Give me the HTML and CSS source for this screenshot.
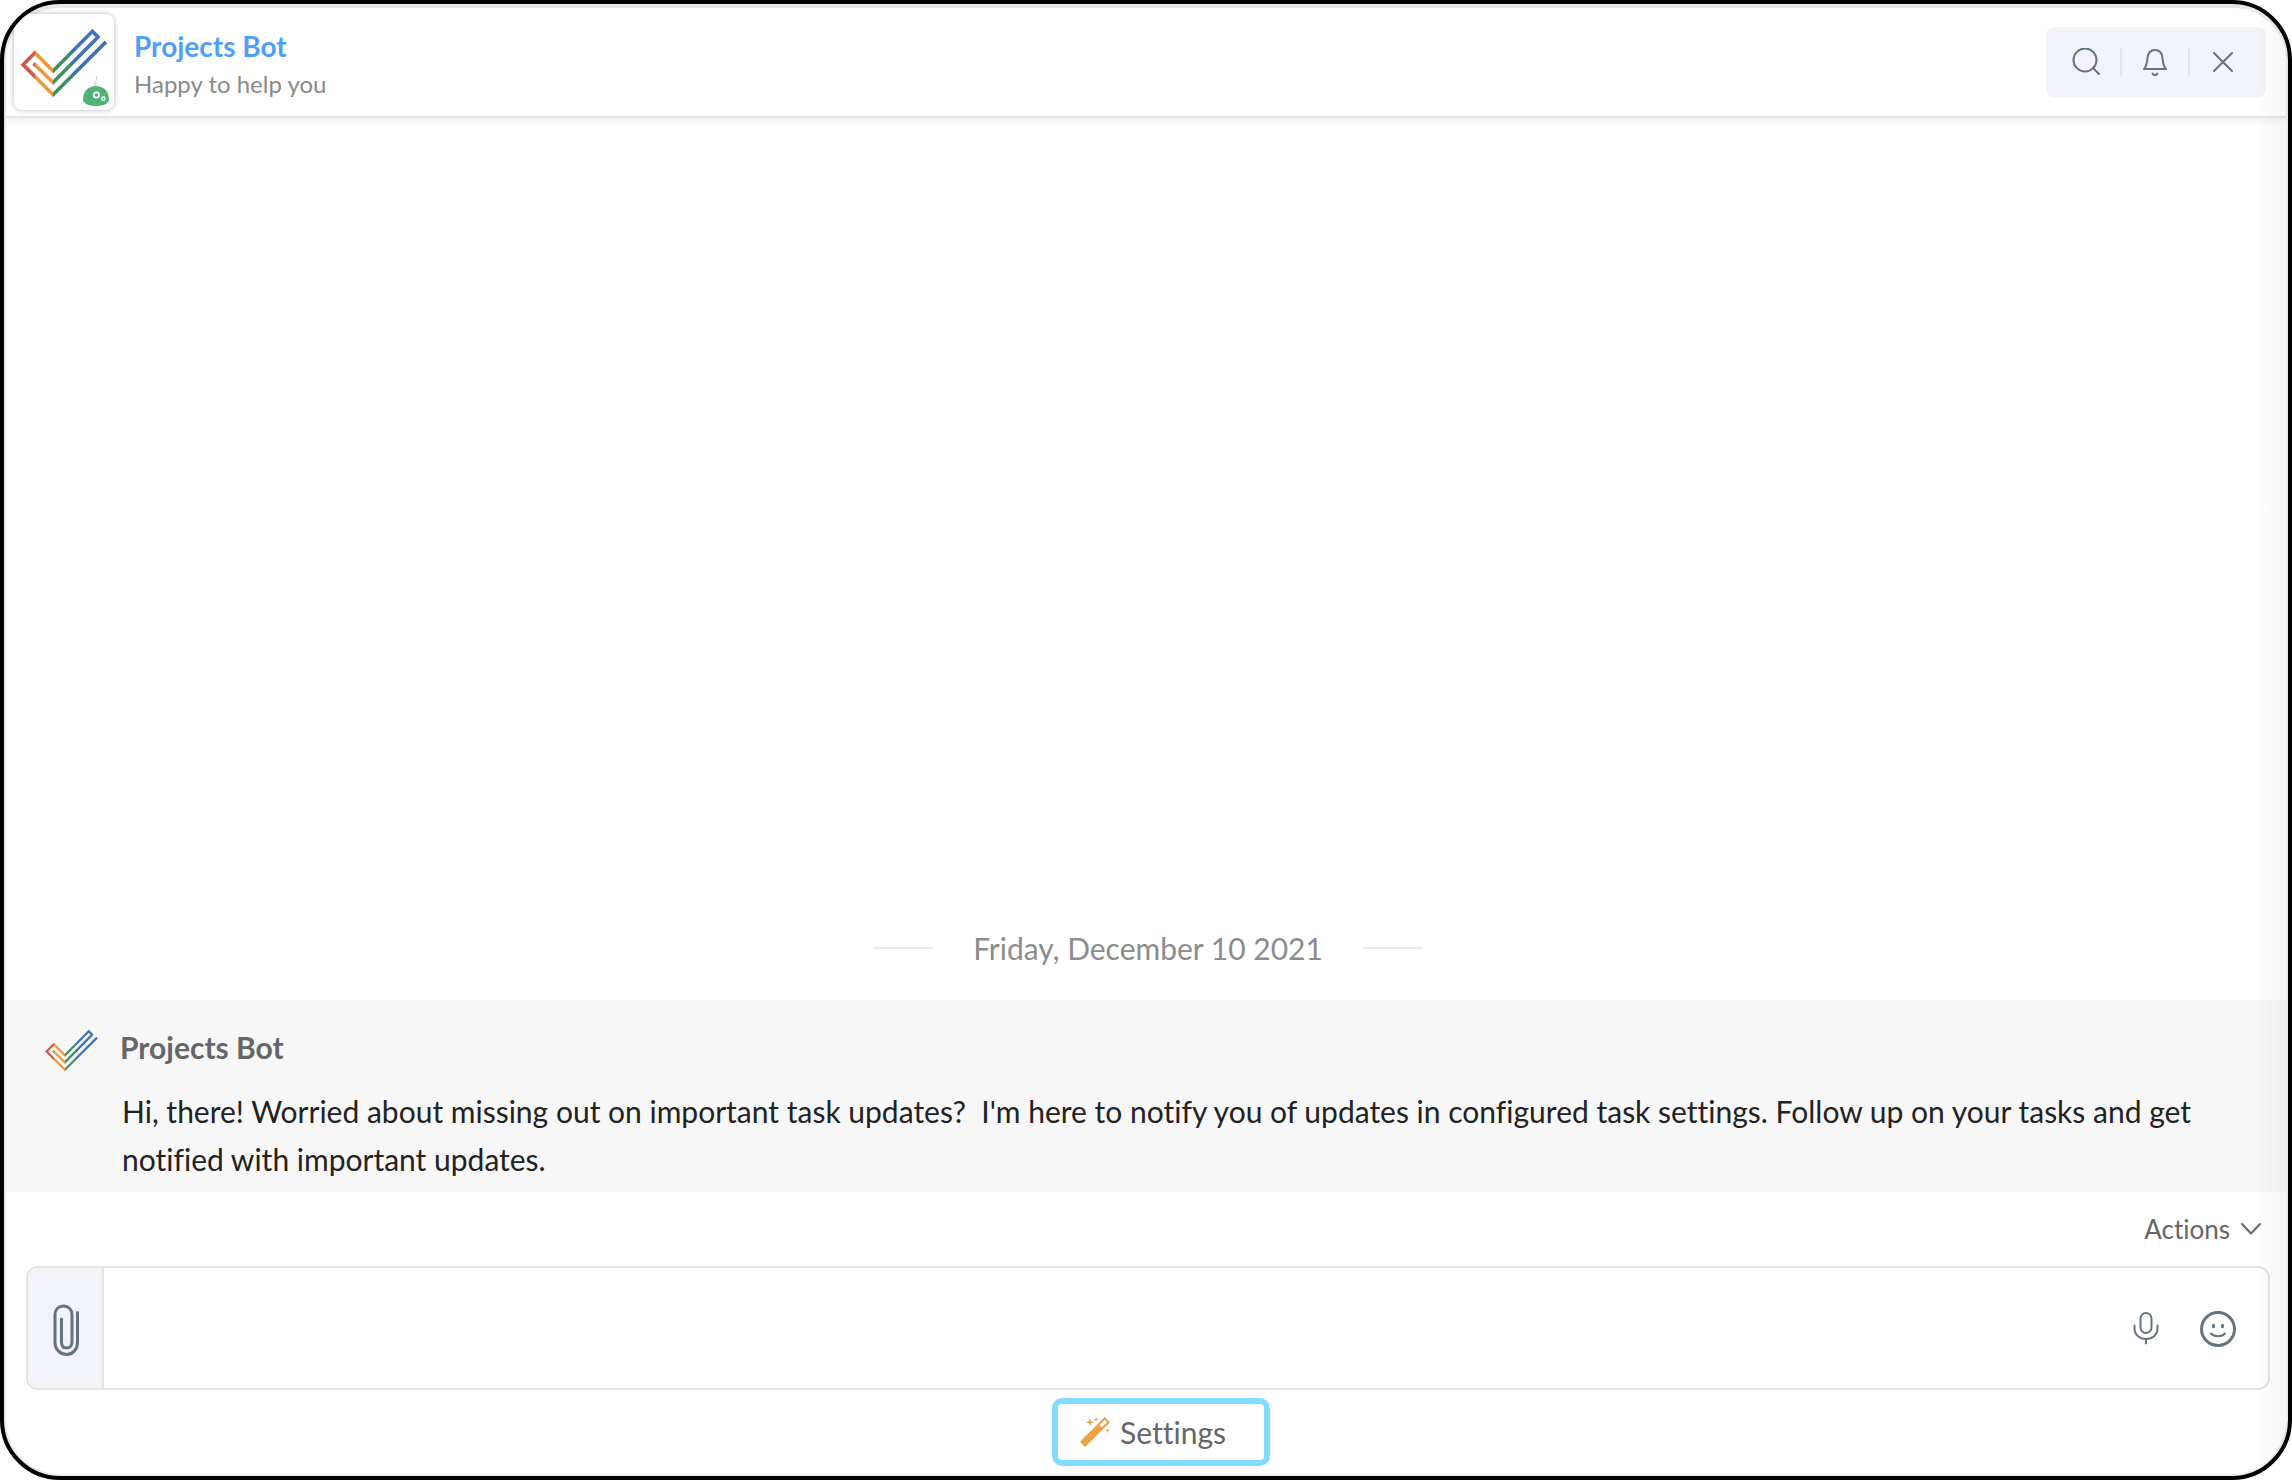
FILE: index.html
```html
<!DOCTYPE html>
<html lang="en">
<head>
<meta charset="utf-8">
<title>Projects Bot</title>
<link rel="stylesheet" href="styles.css">
</head>
<body>
<svg class="defs" aria-hidden="true">
  <defs>
    <linearGradient id="check-colors" gradientUnits="userSpaceOnUse" x1="0" y1="0" x2="360" y2="0">
      <stop offset="0.2889" stop-color="#cf584f"/>
      <stop offset="0.2889" stop-color="#ea9a3e"/>
      <stop offset="0.4444" stop-color="#ea9a3e"/>
      <stop offset="0.4444" stop-color="#3f8e64"/>
      <stop offset="0.5917" stop-color="#3f8e64"/>
      <stop offset="0.5917" stop-color="#4073b6"/>
    </linearGradient>
    <symbol id="check" viewBox="60 80 264 212">
      <path d="M319 122L159 282L68 191L104 155L159 210L278 90L295 107L159 245L100 187" fill="none" stroke="url(#check-colors)" stroke-width="11"/>
    </symbol>
  </defs>
</svg>
<div class="window">
  <header class="header">
    <div class="avatar">
      <svg class="avatar-logo" aria-hidden="true"><use href="#check"/></svg>
      <svg class="avatar-bot" viewBox="0 0 78 90" aria-hidden="true">
        <path d="M31 34L34 17M37 32L41 0" fill="none" stroke="#9ad2ad" stroke-width="2"/>
        <path d="M0 69C1 45 17 30 39 30S77 45 78 69C78 83 62 90 39 90S0 83 0 69Z" fill="#52b175"/>
        <circle cx="40" cy="57" r="8" fill="none" stroke="#fff" stroke-width="5"/>
        <circle cx="61" cy="68" r="5" fill="none" stroke="#fff" stroke-width="4"/>
      </svg>
    </div>
    <div class="identity">
      <h1 class="title">Projects Bot</h1>
      <p class="subtitle">Happy to help you</p>
    </div>
    <div class="tools">
      <button class="tool" type="button" aria-label="Search">
        <svg class="tool-icon" viewBox="0 0 28 28"><circle cx="13" cy="12" r="11.5"/><path d="M21 20L27 26"/></svg>
      </button>
      <button class="tool" type="button" aria-label="Notifications">
        <svg class="tool-icon" viewBox="0 0 28 28"><path d="M3 21C6 18 6 14 6.500 10C7 5 10 2 14 2S21 5 21.500 10C22 14 22 18 25 21Z"/><path d="M11.500 25.500C12 27.500 16 27.500 16.500 25.500"/></svg>
      </button>
      <button class="tool" type="button" aria-label="Close">
        <svg class="tool-icon" viewBox="0 0 28 28"><path d="M5 5L23 23M23 5L5 23"/></svg>
      </button>
    </div>
  </header>

  <main class="conversation">
    <div class="date">Friday, December 10 2021</div>
    <article class="message">
      <svg class="message-logo" aria-hidden="true"><use href="#check"/></svg>
      <div class="message-body">
        <h2 class="author">Projects Bot</h2>
        <p class="text">Hi, there! Worried about missing out on important task updates?&nbsp; I'm here to notify you of updates in configured task settings. Follow up on your tasks and get notified with important updates.</p>
      </div>
    </article>
  </main>

  <footer class="footer">
    <div class="actions-row">
      <button class="actions" type="button">Actions
        <svg class="chevron" viewBox="0 0 22 14" aria-hidden="true"><path d="M2 2L11 11.500L20 2"/></svg>
      </button>
    </div>
    <div class="composer">
      <button class="attach" type="button" aria-label="Attach a file">
        <svg class="clip" viewBox="0 0 26 52"><path d="M24.500 8.500V38.500C24.500 45.500 19.500 50.500 13.500 50.500S2 45.500 2 38.500V11C2 5.500 5.500 2 10.500 2S19 5.500 19 11V38C19 42 16.500 44 13.500 44S8.500 42 8.500 38V15"/></svg>
      </button>
      <textarea class="entry" aria-label="Message"></textarea>
      <div class="entry-tools">
        <button class="entry-tool" type="button" aria-label="Record audio">
          <svg class="entry-icon" viewBox="0 0 36 36"><rect x="12.500" y="2" width="11" height="20" rx="5.500"/><path d="M6.500 14.500V17.500C6.500 24 12 28 18 28S29.500 24 29.500 17.500V14.500M18 28V32.500"/></svg>
        </button>
        <button class="entry-tool" type="button" aria-label="Emoji">
          <svg class="entry-icon" viewBox="0 0 36 36"><circle class="face" cx="18" cy="18" r="16.500"/><path d="M11 22.500C14 26 22 26 25 22.500"/><g class="eyes"><ellipse cx="13.500" cy="15" rx="1.600" ry="2.200"/><ellipse cx="22.500" cy="15" rx="1.600" ry="2.200"/></g></svg>
        </button>
      </div>
    </div>
    <button class="settings" type="button">
      <svg class="wand" viewBox="0 0 90 90" aria-hidden="true">
        <path fill-rule="evenodd" d="M0 74L74 0L90 16L15 90ZM59 24L65 31L81 16L74 9Z"/>
        <path d="M30 3L33 13L43 16L33 19L30 29L27 19L17 16L27 13ZM48 0L50 5L55 7L50 9L48 14L46 9L41 7L46 5ZM83 34L85 39L90 41L85 43L83 48L81 43L76 41L81 39Z"/>
      </svg>
      Settings
    </button>
  </footer>
</div>
</body>
</html>
```
FILE: styles.css
```css
* {
  box-sizing: border-box;
}

body {
  margin: 0;
  background: #fff;
  font-family: Lato, "Liberation Sans", sans-serif;
  font-variant-ligatures: no-common-ligatures;
}

h1, h2, p {
  margin: 0;
}

button {
  padding: 0;
  border: 0;
  background: none;
  color: inherit;
  font: inherit;
  font-variant-ligatures: inherit;
}

.defs {
  position: absolute;
  width: 0;
  height: 0;
}

.window {
  position: relative;
  display: flex;
  flex-direction: column;
  min-height: 100vh;
  padding: 4px 2px 2px;
  border: 4px solid #000;
  border-radius: 60px;
  background:
    linear-gradient(#fff, #fff) content-box,
    #eaeaef;
  overflow: hidden;
}

.window::after {
  content: "";
  position: absolute;
  top: 4px;
  right: 2px;
  bottom: 2px;
  width: 30px;
  background: linear-gradient(to right, rgba(60, 70, 70, 0), rgba(60, 70, 70, 0.05));
  pointer-events: none;
}

.header {
  display: flex;
  align-items: center;
  height: 110px;
  padding: 0 20px 0 8px;
  border-bottom: 2px solid #e5e5e5;
  box-shadow: 0 2px 8px rgba(0, 0, 0, 0.08);
}

.avatar {
  position: relative;
  width: 100px;
  height: 96px;
  padding: 14px 6px;
  border-radius: 8px;
  background: #fff;
  box-shadow: 0 0 5px rgba(0, 0, 0, 0.3);
}

.avatar-logo {
  display: block;
  width: 88px;
  height: 70px;
}

.avatar-bot {
  position: absolute;
  right: 5px;
  bottom: 4px;
  width: 26px;
  height: 30px;
}

.identity {
  flex: 1;
  padding: 4px 0 0 20px;
}

.title {
  color: #4f9ff8;
  font-size: 28px;
  font-weight: 700;
  line-height: 40px;
}

.subtitle {
  color: #8a8a8a;
  font-size: 24px;
  line-height: 36px;
}

.tools {
  display: flex;
  align-items: center;
  height: 70px;
  padding: 0 10px 0 6px;
  border-radius: 8px;
  background: #f2f3f8;
}

.tool {
  display: flex;
  justify-content: center;
  width: 68px;
}

.tool + .tool {
  border-left: 2px solid #e3e4e8;
}

.tool-icon, .chevron, .clip, .entry-icon {
  fill: none;
  stroke: #65737f;
  stroke-width: 2;
  stroke-linecap: round;
  stroke-linejoin: round;
}

.tool-icon {
  width: 28px;
  height: 28px;
}

.conversation {
  flex: 1;
  display: flex;
  flex-direction: column;
  justify-content: flex-end;
}

.date {
  display: flex;
  align-items: center;
  justify-content: center;
  gap: 40px;
  margin-bottom: 34px;
  padding-left: 4px;
  color: #8c8c8c;
  font-size: 30px;
  line-height: 36px;
}

.date::before, .date::after {
  content: "";
  width: 60px;
  height: 2px;
  background: #eaeaf1;
}

.message {
  display: flex;
  padding: 29px 76px 9px 39px;
  background: #f7f7f7;
}

.message-logo {
  flex: none;
  width: 53px;
  height: 43px;
}

.message-body {
  padding-left: 22px;
}

.author {
  color: #666;
  font-size: 30px;
  font-weight: 700;
  line-height: 36px;
}

.text {
  padding: 22px 0 0 2px;
  color: #222;
  font-size: 30px;
  line-height: 48px;
}

.footer {
  display: flex;
  flex-direction: column;
  padding: 0 16px 8px 20px;
}

.actions-row {
  display: flex;
  justify-content: flex-end;
  height: 74px;
  padding-right: 8px;
}

.actions {
  display: flex;
  align-items: center;
  gap: 10px;
  color: #666;
  font-size: 26px;
}

.chevron {
  width: 22px;
  height: 14px;
  stroke: #666;
}

.composer {
  display: flex;
  height: 124px;
  border: 2px solid #e4e4e4;
  border-radius: 12px;
  overflow: hidden;
}

.attach {
  display: flex;
  align-items: center;
  justify-content: center;
  width: 76px;
  padding: 4px 0 0 2px;
  border-right: 2px solid #e4e4e4;
  background: #f2f3f8;
}

.clip {
  width: 26px;
  height: 52px;
  stroke-width: 3;
}

.entry {
  flex: 1;
  padding: 36px 20px;
  border: 0;
  outline: 0;
  background: transparent;
  color: #222;
  font: inherit;
  font-size: 30px;
  resize: none;
}

.entry-tools {
  display: flex;
  align-items: center;
  gap: 36px;
  padding: 2px 32px 0 0;
}

.entry-tool {
  display: flex;
}

.entry-icon {
  width: 36px;
  height: 36px;
}

.face {
  stroke-width: 3;
}

.eyes {
  fill: #65737f;
  stroke: none;
}

.settings {
  display: flex;
  align-items: center;
  align-self: center;
  gap: 10px;
  height: 68px;
  margin: 8px 0 0 26px;
  padding: 0 38px 0 22px;
  border: 6px solid #85daff;
  border-radius: 10px;
  background: #fff;
  color: #666;
  font-size: 30px;
}

.wand {
  width: 30px;
  height: 30px;
  fill: #eba443;
}
```
